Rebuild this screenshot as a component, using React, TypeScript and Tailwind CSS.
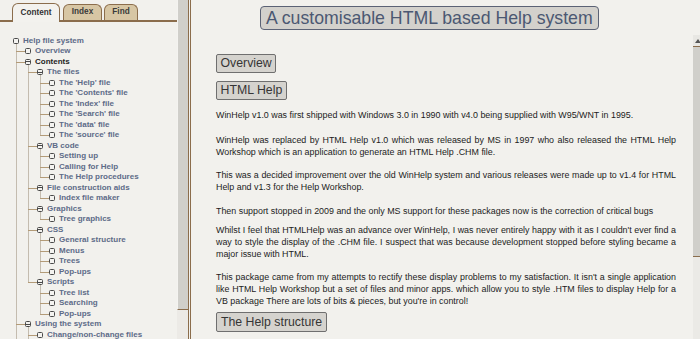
type TreeItem = {
  label: string;
  open?: boolean;
  active?: boolean;
  children?: TreeItem[];
};

const tree: TreeItem = {
  label: 'Help file system',
  children: [
    { label: 'Overview' },
    {
      label: 'Contents',
      open: true,
      active: true,
      children: [
        {
          label: 'The files',
          open: true,
          children: [
            { label: "The 'Help' file" },
            { label: "The 'Contents' file" },
            { label: "The 'Index' file" },
            { label: "The 'Search' file" },
            { label: "The 'data' file" },
            { label: "The 'source' file" },
          ],
        },
        {
          label: 'VB code',
          open: true,
          children: [{ label: 'Setting up' }, { label: 'Calling for Help' }, { label: 'The Help procedures' }],
        },
        { label: 'File construction aids', open: true, children: [{ label: 'Index file maker' }] },
        { label: 'Graphics', open: true, children: [{ label: 'Tree graphics' }] },
        {
          label: 'CSS',
          open: true,
          children: [{ label: 'General structure' }, { label: 'Menus' }, { label: 'Trees' }, { label: 'Pop-ups' }],
        },
        {
          label: 'Scripts',
          open: true,
          children: [{ label: 'Tree list' }, { label: 'Searching' }, { label: 'Pop-ups' }],
        },
      ],
    },
    {
      label: 'Using the system',
      open: true,
      children: [{ label: 'Change/non-change files' }, { label: 'Creating the files' }, { label: 'Compiling' }],
    },
    { label: 'Acknowledgements' },
  ],
};

// spacing below each paragraph, read off the screenshot
const paragraphs = [
  {
    text: 'WinHelp v1.0 was first shipped with Windows 3.0 in 1990 with v4.0 being supplied with W95/WNT in 1995.',
    gap: 'mb-[13px]',
  },
  {
    text: 'WinHelp was replaced by HTML Help v1.0 which was released by MS in 1997 who also released the HTML Help Workshop which is an application to generate an HTML Help .CHM file.',
    gap: 'mb-[11px]',
  },
  {
    text: 'This was a decided improvement over the old WinHelp system and various releases were made up to v1.4 for HTML Help and v1.3 for the Help Workshop.',
    gap: 'mb-[12px]',
  },
  {
    text: 'Then support stopped in 2009 and the only MS support for these packages now is the correction of critical bugs',
    gap: 'mb-[7px]',
  },
  {
    text: "Whilst I feel that HTMLHelp was an advance over WinHelp, I was never entirely happy with it as I couldn't ever find a way to style the display of the .CHM file. I suspect that was because development stopped before styling became a major issue with HTML.",
    gap: 'mb-[11px]',
  },
  {
    text: "This package came from my attempts to rectify these display problems to my satisfaction. It isn't a single application like HTML Help Workshop but a set of files and minor apps. which allow you to style .HTM files to display Help for a VB package There are lots of bits & pieces, but you're in control!",
    gap: 'mb-[5px]',
  },
];

function NodeBox({ open }: { open?: boolean }) {
  return (
    <span className="flex h-[6px] w-[6px] shrink-0 items-center justify-center rounded-[1.5px] border border-[#4a4a4a] bg-[#f4f3f0]">
      {open && <span className="h-px w-[4px] bg-[#4a4a4a]" />}
    </span>
  );
}

function Row({ item }: { item: TreeItem }) {
  return (
    <div className="flex h-[10.5px] items-center gap-[4px]">
      <NodeBox open={item.open} />
      <span
        className={
          item.active
            ? 'whitespace-nowrap text-[8px] font-bold leading-[10.5px] text-[#1e1e1e]'
            : 'whitespace-nowrap text-[8px] font-bold leading-[10.5px] text-[#5d6b88]'
        }
      >
        {item.label}
      </span>
    </div>
  );
}

function Branch({ item, last }: { item: TreeItem; last: boolean }) {
  return (
    <li className="relative pl-[9px]">
      <span
        className={
          last
            ? 'absolute left-0 top-[-2.5px] h-[8.5px] w-px bg-[#c4bcaf]'
            : 'absolute bottom-0 left-0 top-[-2.5px] w-px bg-[#c4bcaf]'
        }
      />
      <span className="absolute left-0 top-[5px] h-px w-[9px] bg-[#b39b78]" />
      <Row item={item} />
      {item.children && (
        <ul className="ml-[3px]">
          {item.children.map((c, i) => (
            <Branch key={i} item={c} last={i === item.children!.length - 1} />
          ))}
        </ul>
      )}
    </li>
  );
}

function Tabs() {
  return (
    <div className="flex h-[22px] shrink-0 items-end border-b-2 border-[#8b6d4c] pl-[12px]">
      <div className="-mb-[2px] flex h-[19px] w-[48px] items-center justify-center rounded-t-[6px] border-[1.5px] border-b-0 border-[#8b6d4c] bg-[#f3f2ee] text-[8.2px] font-bold text-[#333]">
        Content
      </div>
      <div className="ml-[3px] flex h-[16px] w-[39px] items-center justify-center rounded-t-[6px] border-[1.5px] border-b-0 border-[#8b6d4c] bg-[#d7c6a4] text-[8.2px] font-bold text-[#3a3a3a]">
        Index
      </div>
      <div className="ml-[2px] flex h-[16px] w-[34px] items-center justify-center rounded-t-[6px] border-[1.5px] border-b-0 border-[#8b6d4c] bg-[#d7c6a4] text-[8.2px] font-bold text-[#3a3a3a]">
        Find
      </div>
    </div>
  );
}

function SectionButton({ children, tall }: { children: string; tall?: boolean }) {
  return (
    <div
      className={
        tall
          ? 'flex h-[20px] w-fit items-center rounded-[2px] border border-[#6f6f6f] bg-[#d5d3ce] px-[4px] text-[12.3px] leading-none text-[#353535]'
          : 'flex h-[19px] w-fit items-center rounded-[2px] border border-[#6f6f6f] bg-[#d5d3ce] px-[3.5px] text-[12.3px] leading-none text-[#353535]'
      }
    >
      {children}
    </div>
  );
}

export default function App() {
  return (
    <div className="flex h-[339px] w-[700px] overflow-hidden bg-[#f2f1ed] font-['Liberation_Sans',Arial,sans-serif]">
      {/* Left: tabs + tree */}
      <aside className="flex w-[191px] shrink-0 border-r-[3px] border-double border-[#8b6d4c]">
        <div className="flex w-[177px] flex-col overflow-hidden">
          <Tabs />
          <div className="pl-[13px] pt-[13.5px]">
            <Row item={tree} />
            <ul className="ml-[3px]">
              {tree.children!.map((c, i) => (
                <Branch key={i} item={c} last={i === tree.children!.length - 1} />
              ))}
            </ul>
          </div>
        </div>
        <div className="flex w-[11px] flex-col">
          <div className="h-[310px] border-b border-l border-b-[#8b6d4c] border-l-[#f4f3f0] bg-[#d0cfca]" />
          <div className="flex-1 bg-[#eceae6]" />
        </div>
      </aside>

      {/* Right: heading + scrolling content */}
      <main className="flex min-w-0 flex-1 flex-col">
        <div className="h-[35px] shrink-0 pl-[69px] pt-[6px]">
          <div className="flex h-[24px] w-fit items-center rounded-[4px] border border-[#5b6275] bg-[#d3d1cc] px-[5px] text-[17.7px] text-[#4b5872]">
            A customisable HTML based Help system
          </div>
        </div>
        <div className="flex min-h-0 flex-1">
          <div className="min-w-0 flex-1 overflow-hidden pl-[25px] pr-[17px] pt-[19px]">
            <SectionButton>Overview</SectionButton>
            <div className="mt-[8px]">
              <SectionButton>HTML Help</SectionButton>
            </div>
            <div className="mt-[9px]">
              {paragraphs.map((p, i) => (
                <p key={i} className={`${p.gap} text-justify text-[8.9px] leading-[12px] text-[#1c1c1c]`}>
                  {p.text}
                </p>
              ))}
            </div>
            <SectionButton tall>The Help structure</SectionButton>
          </div>
          <div className="flex w-[7px] shrink-0 flex-col">
            <div className="flex h-[11px] items-center bg-[#e8e7e3] pl-[2px]">
              <span className="h-0 w-0 border-x-[3px] border-b-[4px] border-x-transparent border-b-[#555]" />
            </div>
            <div className="h-[211px] border-y border-[#8b6d4c] bg-[#d0cfca]" />
            <div className="flex-1 bg-[#ebeae6]" />
          </div>
        </div>
      </main>
    </div>
  );
}
